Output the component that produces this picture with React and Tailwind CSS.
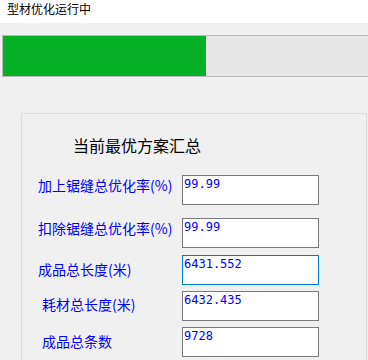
export default function App() {
  const cjk = { fontFamily: '"Noto Sans CJK SC", "Noto Sans", sans-serif' };
  const mono = { fontFamily: '"DejaVu Sans Mono", "Liberation Mono", monospace' };
  const rows = [
    { label: "加上锯缝总优化率(%)", value: "99.99", mt: "mt-[22px]", pl: "pl-[16px]", pb: "pb-[10px]", focus: false },
    { label: "扣除锯缝总优化率(%)", value: "99.99", mt: "mt-[13px]", pl: "pl-[16px]", pb: "pb-[10px]", focus: false },
    { label: "成品总长度(米)", value: "6431.552", mt: "mt-[7px]", pl: "pl-[16px]", pb: "pb-[3px]", focus: true },
    { label: "耗材总长度(米)", value: "6432.435", mt: "mt-[6px]", pl: "pl-[20px]", pb: "pb-[5px]", focus: false },
    { label: "成品总条数", value: "9728", mt: "mt-[6px]", pl: "pl-[20px]", pb: "pb-[3px]", focus: false },
  ];
  return (
    <div className="w-[368px] h-[360px] overflow-hidden bg-[#f0f0f0] flex flex-col" style={cjk}>
      <div className="h-[23px] shrink-0 bg-white pl-[7px] pt-[2px] text-[12px] leading-[14px] text-black">
        型材优化运行中
      </div>
      <div className="mt-[12px] ml-[2px] w-[400px] h-[42px] shrink-0 border border-[#bcbcbc] bg-[#e6e6e6] flex">
        <div className="w-[203px] h-full bg-[#06b025]" />
      </div>
      <div className="mt-[36px] ml-[21px] w-[346px] h-[300px] shrink-0 border border-[#dcdcdc] flex flex-col">
        <div className="mt-[23px] pl-[51px] text-[16px] leading-[16px] text-black">当前最优方案汇总</div>
        {rows.map((r, i) => (
          <div key={i} className={`${r.mt} flex items-center h-[30px]`}>
            <div className={`w-[160px] shrink-0 ${r.pl} ${r.pb} text-[14px] leading-[16px] text-[#0000ff] whitespace-nowrap`}>
              {r.label}
            </div>
            <div
              className={`w-[137px] h-[30px] bg-white border ${r.focus ? "border-[#0078d7]" : "border-[#7a7a7a]"} pl-[1px] pt-[1px] text-[12px] leading-[14px] text-[#0000ff]`}
              style={mono}
            >
              {r.value}
            </div>
          </div>
        ))}
      </div>
    </div>
  );
}
